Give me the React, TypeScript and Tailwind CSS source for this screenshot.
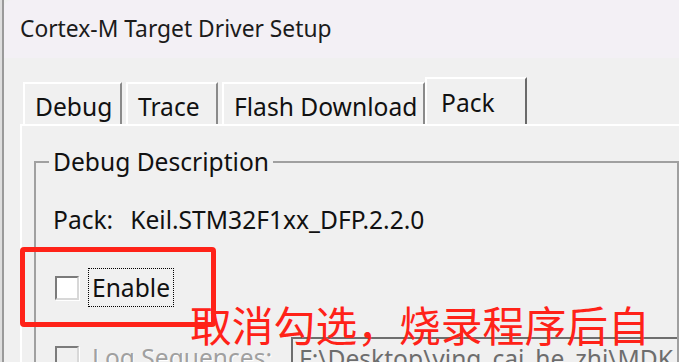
import React from "react";

const ui = "font-['Noto_Sans','Liberation_Sans',sans-serif]";

function Tab({
  label,
  width,
  selected = false,
}: {
  label: string;
  width: string;
  selected?: boolean;
}) {
  if (selected) {
    return (
      <div
        className={`${width} h-[47px] border-t-2 border-l-2 border-white border-r-2 border-r-[#6a6a6a] pl-[14px] pt-[6px] bg-[#f0f0f0]`}
      >
        <span className="leading-[24px]">{label}</span>
      </div>
    );
  }
  return (
    <div
      className={`${width} h-[42px] border-t-2 border-l-2 border-white border-r-2 border-r-[#8a8a8a] pl-[10px] pt-[5px]`}
    >
      <span className="leading-[24px]">{label}</span>
    </div>
  );
}

function Checkbox({ disabled = false }: { disabled?: boolean }) {
  return (
    <div
      className={`shrink-0 w-[24px] h-[24px] border-2 border-t-[#7b7b7b] border-l-[#7b7b7b] border-b-[#d8d8d8] border-r-[#d8d8d8] shadow-[1px_1px_0_#fff] ${
        disabled ? "bg-[#f0f0f0]" : "bg-white"
      }`}
    />
  );
}

export default function App() {
  return (
    <div
      className={`relative w-[679px] h-[362px] overflow-hidden bg-[#f0f0f0] flex text-[24.6px] text-[#111] ${ui}`}
    >
      {/* part of the window behind */}
      <div className="shrink-0 w-[4px] h-full bg-[#dedede] border-r-2 border-[#9a9a9a]" />

      <div className="flex-1 flex flex-col min-h-0">
        <div className="shrink-0 h-[58px] bg-[#f3f0f5] rounded-tl-[8px] flex items-center pl-[16px] text-[22.8px] text-[#1b1b1b]">
          Cortex-M Target Driver Setup
        </div>

        <div className="shrink-0 pl-[16px] pt-[19px]">
          {/* tabs */}
          <div className="flex items-end pl-[3px]">
            <Tab label="Debug" width="w-[99px]" />
            <div className="w-[4px]" />
            <Tab label="Trace" width="w-[92px]" />
            <div className="w-[4px]" />
            <Tab label="Flash Download" width="w-[203px]" />
            <Tab label="Pack" width="w-[102px]" selected />
          </div>

          {/* tab page */}
          <div className="border-t-2 border-l-2 border-white h-[300px] pl-[12px] pt-[24px]">
            <fieldset className="border-2 border-[#a0a0a0] h-[400px]">
              <legend className="ml-[13px] px-[4px] leading-[24px]">
                Debug Description
              </legend>

              <div className="pl-[17px] mt-[34px] leading-[24px] flex">
                <span>Pack:</span>
                <span className="ml-[17px]">Keil.STM32F1xx_DFP.2.2.0</span>
              </div>

              <div className="flex items-center pl-[19px] mt-[36px]">
                <Checkbox />
                <div className="ml-[9px] h-[39px] px-[3px] flex items-center border border-dotted border-black leading-[24px]">
                  Enable
                </div>
              </div>

              <div className="flex items-center pl-[19px] mt-[30px]">
                <Checkbox disabled />
                <div className="shrink-0 w-[212px] pl-[13px] leading-[24px] text-[#a0a0a0] [text-shadow:1px_1px_0_#fff]">
                  Log Sequences:
                </div>
                <div className="flex-1 min-w-0 h-[42px] border-t-2 border-l-2 border-[#6e6e6e] pl-[6px] pt-[8px] leading-[24px] text-[#6d6d6d] whitespace-nowrap overflow-hidden">
                  F:\Desktop\ying_cai_he_zhi\MDK
                </div>
              </div>
            </fieldset>
          </div>
        </div>
      </div>

      {/* red annotation */}
      <div className="absolute left-[20px] top-[247px] w-[196px] h-[80px] border-[5px] border-[#ff2218] rounded-[4px]" />
      <div className="absolute left-[190px] top-[303px] text-[41.8px] leading-[42px] text-[#ff2218] whitespace-nowrap font-['Noto_Sans_CJK_SC',sans-serif]">
        取消勾选，烧录程序后自
      </div>
    </div>
  );
}
